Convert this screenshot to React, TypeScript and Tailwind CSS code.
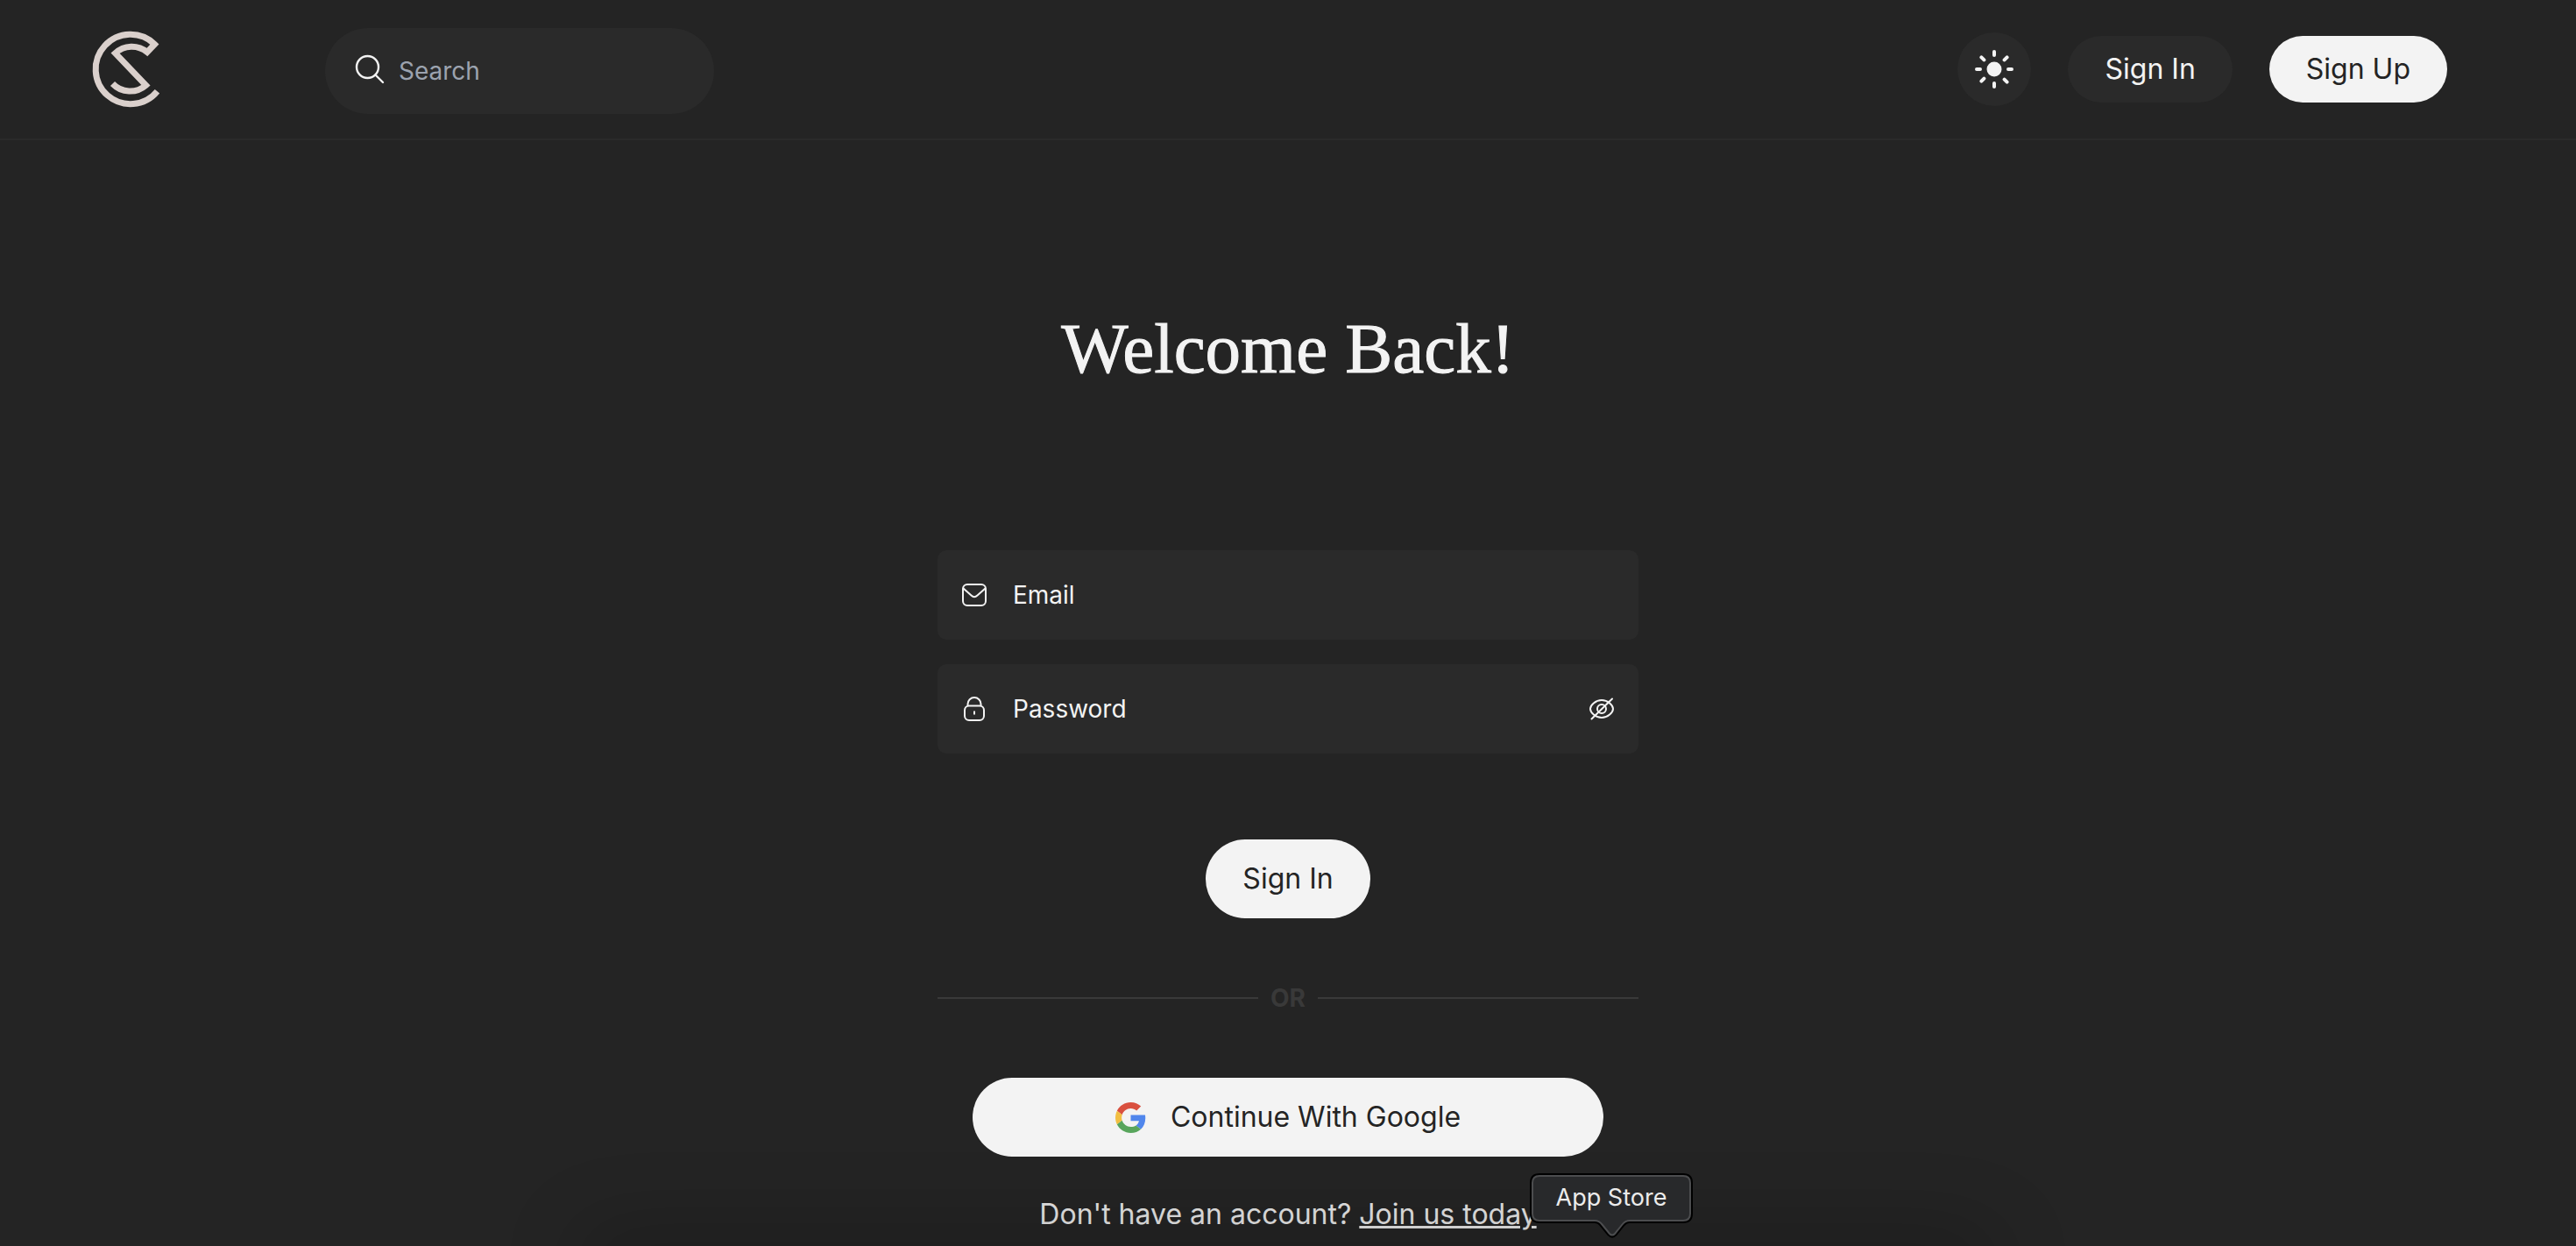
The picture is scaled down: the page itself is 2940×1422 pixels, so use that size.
import React from "react";

function Logo() {
  return (
    <svg viewBox="0 0 130 130" className="size-[130px]" fill="none" stroke="#dad0cc" strokeWidth="7" aria-label="Home">
      <path d="M99.5 94.3A39.7 39.7 0 1 1 96.5 40.5L88 49.5A27.5 27.5 0 0 0 51.5 50.7L86.5 87.3A27.5 27.5 0 0 1 48.5 85.5" />
    </svg>
  );
}

function SearchIcon() {
  return (
    <svg viewBox="0 0 34 34" className="mb-1 size-[34px] shrink-0" fill="none" stroke="#f3f3f3" strokeWidth="2.4" strokeLinecap="round">
      <circle cx="14.5" cy="14.5" r="12.5" />
      <path d="M23.5 23.5l8.5 8.5" />
    </svg>
  );
}

function SunIcon() {
  return (
    <svg viewBox="0 0 76 76" className="size-[76px] shrink-0" fill="none" stroke="#f3f3f3" strokeWidth="4" strokeLinecap="round">
      <circle cx="38" cy="38" r="8.5" fill="#f3f3f3" stroke="none" />
      <path d="M38 18v4M38 54v4M18 38h4M54 38h4M23.4 24.4l3 3M49.6 49.6l3 3M23.4 51.6l3-3M49.6 27.4l3-3" />
    </svg>
  );
}

function MailIcon() {
  return (
    <svg viewBox="0 0 28 28" className="size-[28px]" fill="none" stroke="#f3f3f3" strokeWidth="2" strokeLinecap="round" strokeLinejoin="round">
      <rect x="1" y="2" width="26" height="24" rx="5" />
      <path d="M1.5 6.5L10.5 14.5Q14 18 17.5 14.5L26.5 6.5" />
    </svg>
  );
}

function LockIcon() {
  return (
    <svg viewBox="0 0 28 28" className="size-[28px]" fill="none" stroke="#f3f3f3" strokeWidth="2">
      <rect x="3" y="10.5" width="22" height="16.5" rx="5" />
      <path d="M6.5 10.5V8.5a7.5 7.5 0 0 1 15 0V10.5" />
      <path d="M14 16.5v4" />
    </svg>
  );
}

function EyeOffIcon() {
  return (
    <svg viewBox="0 0 28 28" className="size-[28px]" fill="none" stroke="#f3f3f3" strokeWidth="2" strokeLinecap="round">
      <path d="M1 14C1 10 7 4 14 4s13 6 13 10-6 10-13 10S1 18 1 14z" />
      <circle cx="14" cy="14" r="5" />
      <path d="M2.5 25.5L26 2.5" />
    </svg>
  );
}

function GoogleIcon() {
  return (
    <svg viewBox="0 0 48 48" className="size-[35px]">
      <path fill="#d9503f" d="M24 9.500c3.540 0 6.710 1.220 9.210 3.600l6.850-6.850C35.900 2.380 30.470 0 24 0 14.620 0 6.510 5.380 2.560 13.220l7.980 6.190C12.430 13.720 17.740 9.500 24 9.500z" />
      <path fill="#5086ec" d="M46.980 24.550c0-1.570-.15-3.090-.38-4.550H24v9.020h12.940c-.58 2.960-2.260 5.480-4.780 7.180l7.730 6c4.510-4.180 7.090-10.360 7.090-17.650z" />
      <path fill="#f2be42" d="M10.530 28.590c-.48-1.450-.76-2.990-.76-4.590s.27-3.140.76-4.590l-7.980-6.190C.92 16.460 0 20.120 0 24c0 3.880.92 7.540 2.560 10.780l7.970-6.190z" />
      <path fill="#58a55c" d="M24 48c6.480 0 11.930-2.130 15.890-5.810l-7.730-6c-2.150 1.450-4.920 2.300-8.160 2.300-6.260 0-11.570-4.220-13.470-9.910l-7.980 6.190C6.510 42.620 14.620 48 24 48z" />
    </svg>
  );
}

function Field({ id, label, type, icon, action }: { id: string; label: string; type: string; icon: React.ReactNode; action?: React.ReactNode }) {
  return (
    <div className="flex h-[102px] items-center rounded-[10px] bg-[#2a2a2a] px-7">
      <label htmlFor={id} className="shrink-0 pr-[30px]" aria-label={label}>
        {icon}
      </label>
      <input
        id={id}
        type={type}
        placeholder={label}
        className="min-w-0 flex-1 bg-transparent text-[28px] text-[#f3f3f3] outline-none placeholder:text-[#f3f3f3]"
      />
      {action}
    </div>
  );
}

function Tooltip() {
  return (
    <div className="absolute bottom-[9px] left-1/2 ml-[276px] w-[186px]">
      <svg viewBox="0 0 186 74" className="absolute top-0 left-0 h-[74px] w-[186px]">
        <path
          d="M11 3H175Q183 3 183 11V46Q183 54 175 54H114Q109 54 105.5 58.5L97 69Q94 72 91 69L82.5 58.5Q79 54 74 54H11Q3 54 3 46V11Q3 3 11 3Z"
          fill="#28292b"
          stroke="#000"
          strokeWidth="6"
        />
        <path
          d="M11 3H175Q183 3 183 11V46Q183 54 175 54H114Q109 54 105.5 58.5L97 69Q94 72 91 69L82.5 58.5Q79 54 74 54H11Q3 54 3 46V11Q3 3 11 3Z"
          fill="#28292b"
          stroke="#4c4d4f"
          strokeWidth="2"
        />
      </svg>
      <div role="tooltip" className="relative flex h-[74px] justify-center pt-[12px] text-[27px] leading-8 text-[#ececec]">
        App Store
      </div>
    </div>
  );
}

export default function App() {
  return (
    <div className="relative flex min-h-screen flex-col overflow-hidden bg-[#242424] font-['Inter',sans-serif] text-[#f3f3f3]">
      <header className="flex h-[160px] items-center border-b-2 border-[#2a2a2a] pr-[147px] pl-20">
        <a href="#" className="-mt-2">
          <Logo />
        </a>
        <label className="mt-1 ml-[161px] flex h-[98px] w-[444px] items-center gap-4 rounded-full bg-[#2a2a2a] pr-8 pl-[34px]">
          <SearchIcon />
          <input type="search" aria-label="Search" placeholder="Search" className="min-w-0 flex-1 bg-transparent text-[28px] outline-none placeholder:text-[#9ca3af]" />
        </label>
        <div className="ml-auto flex items-center gap-[42px]">
          <button aria-label="Toggle theme" className="flex size-[84px] items-center justify-center rounded-full bg-[#2a2a2a]">
            <SunIcon />
          </button>
          <button className="h-[76px] rounded-full bg-[#2a2a2a] px-[42px] text-[32px]">Sign In</button>
          <button className="h-[76px] rounded-full bg-[#f3f3f3] px-[42px] text-[32px] text-[#242424]">Sign Up</button>
        </div>
      </header>
      <main className="flex flex-col items-center">
        <h1 className="mt-[190px] font-['Liberation_Serif',serif] text-[81px] leading-[96px] [-webkit-text-stroke:1px]">Welcome Back!</h1>
        <form className="mt-[182px] flex w-full max-w-[800px] flex-col items-center" onSubmit={(e) => e.preventDefault()}>
          <div className="flex w-full flex-col gap-7">
            <Field id="email" label="Email" type="email" icon={<MailIcon />} />
            <Field
              id="password"
              label="Password"
              type="password"
              icon={<LockIcon />}
              action={
                <button type="button" aria-label="Show password">
                  <EyeOffIcon />
                </button>
              }
            />
          </div>
          <button type="submit" className="mt-[98px] h-[90px] rounded-full bg-[#f3f3f3] px-[42px] text-[32px] text-[#242424]">
            Sign In
          </button>
          <div className="mt-[71px] flex h-10 w-full items-center gap-[14px] text-[28px] font-bold text-[#393939]">
            <span className="h-[2px] flex-1 bg-[#393939]" />
            OR
            <span className="h-[2px] flex-1 bg-[#393939]" />
          </div>
          <button type="button" className="mt-[71px] flex h-[90px] w-[720px] max-w-full items-center justify-center gap-7 rounded-full bg-[#f3f3f3] text-[32px] text-[#242424]">
            <GoogleIcon />
            Continue With Google
          </button>
        </form>
        <p className="mt-[46px] text-[32px] leading-10 text-[#e4e4e4]">
          Don't have an account?{" "}
          <a href="#" className="underline">
            Join us today
          </a>
        </p>
      </main>
      <div className="pointer-events-none absolute right-[23%] -bottom-10 left-[23%] h-10 rounded-full shadow-[0_0_90px_20px_rgba(0,0,0,0.2)]" />
      <Tooltip />
    </div>
  );
}
